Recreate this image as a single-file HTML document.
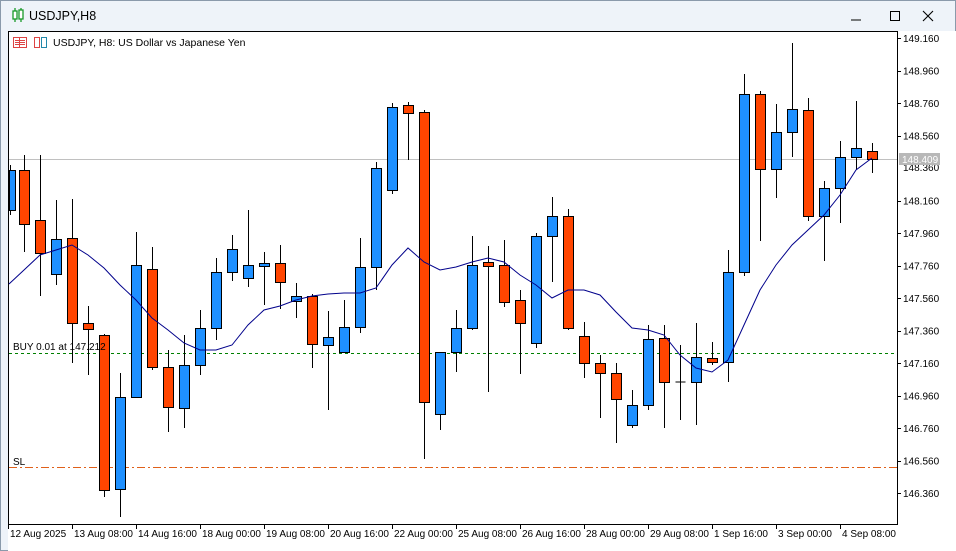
<!DOCTYPE html>
<html><head><meta charset="utf-8"><style>
body{margin:0;width:956px;height:551px;overflow:hidden;background:#eef3f9;font-family:"Liberation Sans",sans-serif;}
svg{position:absolute;left:0;top:0}
</style></head><body>
<svg id="s" width="956" height="551" xmlns="http://www.w3.org/2000/svg" font-family="Liberation Sans, sans-serif">
<rect x="0" y="0" width="956" height="551" fill="#eef3f9"/>
<rect x="0.5" y="0.5" width="955" height="550" fill="none" stroke="#8a9aab"/>
<g stroke="#1a9a2a" fill="none" stroke-width="1.3">
<line x1="15" y1="8" x2="15" y2="22"/><rect x="13" y="11" width="4" height="8" fill="#fff"/>
<line x1="21" y1="8" x2="21" y2="22"/><rect x="19" y="10" width="4" height="9" fill="#fff"/>
</g>
<text x="29" y="20" font-size="12.5" fill="#000">USDJPY,H8</text>
<line x1="851" y1="20" x2="861" y2="20" stroke="#000"/>
<rect x="890.5" y="11.5" width="9" height="9" fill="none" stroke="#000"/>
<path d="M923 11 L933 21 M933 11 L923 21" stroke="#000" stroke-width="1.1"/>
<rect x="8" y="31" width="948" height="520" fill="#fff"/>
<rect x="8.5" y="31.5" width="889" height="493" fill="#fff" stroke="#000"/>
<rect x="13.5" y="37.5" width="13" height="10" fill="#fff" stroke="#d44"/>
<path d="M15 40.5h10M15 42.5h10M15 44.5h10M19.5 38v9" stroke="#d44"/>
<rect x="34.5" y="37.5" width="5" height="10" fill="#fff" stroke="#d44"/>
<rect x="41.5" y="37.5" width="5" height="10" fill="#fff" stroke="#28a"/>
<text x="53" y="46" font-size="10.5" fill="#000">USDJPY, H8:  US Dollar vs Japanese Yen</text>
<g id="g"></g>
<text x="13" y="350" font-size="10" fill="#000">BUY 0.01 at 147.212</text>
<text x="13" y="465" font-size="10" fill="#000">SL</text>
<rect x="899" y="153" width="41" height="12" fill="#b8b8b8"/>
<text x="902" y="163" font-size="10" fill="#fff">148.409</text>
</svg>
<script>
var g=document.getElementById('g'),h='';
var C=[[10,'b',165,215,170,210],[24,'r',155,252,170,224],[40,'r',155,296,220,253],[56,'b',200,285,239,274],[72,'r',199,363,238,323],[88,'r',306,375,323,329],[104,'r',334,497,335,490],[120,'b',373,517,397,489],[136,'b',232,397,265,397],[152,'r',247,370,269,367],[168,'r',350,432,367,407],[184,'b',335,428,365,408],[200,'b',310,375,328,365],[216,'b',258,340,272,328],[232,'b',235,281,249,272],[248,'b',210,287,265,278],[264,'b',252,305,263,266],[280,'r',245,309,263,282],[296,'b',283,318,296,301],[312,'r',294,368,296,344],[328,'b',311,410,337,345],[344,'b',300,352,327,352],[360,'b',238,333,267,327],[376,'b',162,290,168,267],[392,'b',103,194,107,190],[408,'r',102,160,105,113],[424,'r',110,459,112,402],[440,'b',352,430,352,414],[456,'b',310,372,328,352],[472,'b',236,330,265,328],[488,'r',246,392,262,266],[504,'r',240,307,265,302],[520,'r',290,374,300,323],[536,'b',233,348,236,343],[552,'b',197,282,216,236],[568,'r',209,330,216,328],[584,'r',322,378,336,363],[600,'r',355,418,363,373],[616,'r',363,443,373,399],[632,'b',390,428,405,425],[648,'b',325,410,339,405],[664,'r',325,428,338,382],[680,'d',345,420,382,383],[696,'b',323,425,357,382],[712,'r',342,365,358,362],[728,'b',250,382,272,362],[744,'b',74,276,94,272],[760,'r',91,241,94,169],[776,'b',104,198,132,169],[792,'b',43,157,109,132],[808,'r',98,221,110,216],[824,'b',181,261,188,216],[840,'b',141,223,157,188],[856,'b',101,170,148,157],[872,'r',143,173,151,159]];
h+='<line x1="9" y1="159.5" x2="897" y2="159.5" stroke="#c0c0c0"/>';
h+='<line x1="9" y1="353.5" x2="897" y2="353.5" stroke="#008000" stroke-dasharray="3,3"/>';
h+='<line x1="9" y1="467.5" x2="897" y2="467.5" stroke="#e0601a" stroke-dasharray="8,3,2,3"/>';
C.forEach(function(c){var x=c[0]+.5;h+='<line x1="'+x+'" y1="'+c[2]+'" x2="'+x+'" y2="'+c[3]+'" stroke="#000"/>';
if(c[1]=='d'){h+='<line x1="'+(x-5)+'" y1="'+c[4]+'" x2="'+(x+5)+'" y2="'+c[4]+'" stroke="#000"/>';return;}
var f=c[1]=='b'?'#1e90ff':'#ff4500';var x0=Math.max(c[0]-5,9);h+='<rect x="'+(x0+.5)+'" y="'+(c[4]+.5)+'" width="'+(c[0]+5-x0)+'" height="'+Math.max(c[5]-c[4],2)+'" fill="'+f+'" stroke="#000"/>';});
var M=[[9,284],[24,270],[40,255],[56,250],[72,245],[88,255],[104,268],[120,285],[136,300],[152,318],[168,330],[184,343],[200,350],[216,350],[232,345],[248,325],[264,310],[280,306],[296,300],[312,296],[328,294],[344,293],[360,293],[376,288],[392,265],[408,248],[424,262],[440,270],[456,267],[472,262],[488,258],[504,262],[520,275],[536,285],[552,298],[568,290],[584,290],[600,295],[616,312],[632,328],[648,330],[664,335],[680,355],[696,368],[712,372],[728,360],[744,325],[760,290],[776,265],[792,245],[808,230],[824,215],[840,195],[856,170],[872,158]];
h+='<polyline fill="none" stroke="#00008b" points="'+M.map(function(p){return p.join(',')}).join(' ')+'"/>';
for(var i=0;i<15;i++){var y=38+i*32.5;if(i==4)continue;var p=(149.16-i*0.2).toFixed(3);h+='<line x1="897" y1="'+(Math.round(y)+.5)+'" x2="901" y2="'+(Math.round(y)+.5)+'" stroke="#000"/><text x="903" y="'+(y+4)+'" font-size="10" fill="#000">'+p+'</text>';}
h+='<text x="903" y="171" font-size="10" fill="#000">148.360</text>';
var D=['12 Aug 2025','13 Aug 08:00','14 Aug 16:00','18 Aug 00:00','19 Aug 08:00','20 Aug 16:00','22 Aug 00:00','25 Aug 08:00','26 Aug 16:00','28 Aug 00:00','29 Aug 08:00','1 Sep 16:00','3 Sep 00:00','4 Sep 08:00'];
D.forEach(function(d,i){var x=8+i*64;h+='<line x1="'+(x+.5)+'" y1="524" x2="'+(x+.5)+'" y2="529" stroke="#000"/><text x="'+(x+2)+'" y="537" font-size="10" fill="#000">'+d+'</text>';});
g.innerHTML=h;
</script>
</body></html>
